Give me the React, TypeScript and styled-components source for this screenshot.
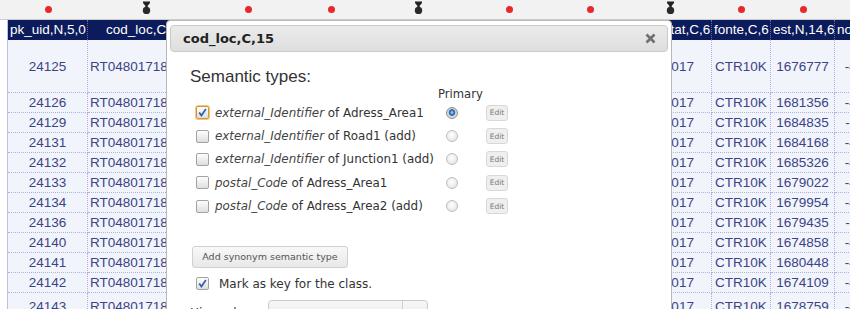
import React from 'react'
import styled, { createGlobalStyle } from 'styled-components'

type Marker = 'dot' | 'pin'

// columns hidden behind the dialog keep short names and no cell text
const columns: { name: string; width: number; marker: Marker; left?: boolean; hidden?: boolean }[] = [
  { name: 'pk_uid,N,5,0', width: 80, marker: 'dot' },
  { name: 'cod_loc,C,15', width: 116, marker: 'pin', left: true },
  { name: 'loc,C,40', width: 88, marker: 'dot', hidden: true },
  { name: 'freg,C,30', width: 78, marker: 'dot', hidden: true },
  { name: 'conc,C,30', width: 96, marker: 'pin', hidden: true },
  { name: 'dist,C,20', width: 86, marker: 'dot', hidden: true },
  { name: 'cp,C,8', width: 76, marker: 'dot', hidden: true },
  { name: 'data_stat,C,6', width: 84, marker: 'pin' },
  { name: 'fonte,C,6', width: 59, marker: 'dot' },
  { name: 'est,N,14,6', width: 64, marker: 'dot' },
  { name: 'nord,N,14,6', width: 70, marker: 'dot' },
]

const template = columns.map(c => `${c.width}px`).join(' ')

const rows = [
  { uid: 24125, est: 1676777, nord: '-412345', h: 53 },
  { uid: 24126, est: 1681356, nord: '-410982' },
  { uid: 24129, est: 1684835, nord: '-411574' },
  { uid: 24131, est: 1684168, nord: '-413206' },
  { uid: 24132, est: 1685326, nord: '-410451' },
  { uid: 24133, est: 1679022, nord: '-412890' },
  { uid: 24134, est: 1679954, nord: '-412617' },
  { uid: 24136, est: 1679435, nord: '-411038' },
  { uid: 24140, est: 1674858, nord: '-414472' },
  { uid: 24141, est: 1680448, nord: '-410725' },
  { uid: 24142, est: 1674109, nord: '-413359' },
  { uid: 24143, est: 1678759, nord: '-412003', h: 28 },
]

const semanticTypes = [
  { prop: 'external_Identifier', cls: 'Adress_Area1', checked: true, primary: true },
  { prop: 'external_Identifier', cls: 'Road1 (add)' },
  { prop: 'external_Identifier', cls: 'Junction1 (add)' },
  { prop: 'postal_Code', cls: 'Adress_Area1' },
  { prop: 'postal_Code', cls: 'Adress_Area2 (add)' },
]

const GlobalStyle = createGlobalStyle`
  html, body {
    margin: 0;
    padding: 0;
    background: #fff;
  }
`

const Page = styled.div`
  position: relative;
  width: 850px;
  height: 309px;
  overflow: hidden;
  background: #fff;
  font-family: 'Liberation Sans', Arial, sans-serif;
`

const MarkerBar = styled.div`
  display: grid;
  grid-template-columns: ${template};
  height: 19px;
  padding-left: 8px;
  background: #f2f2f2;
  border-bottom: 1px solid #cdcdcd;
`

const MarkerCell = styled.div`
  display: flex;
  justify-content: center;
  align-items: center;
`

const Dot = styled.span`
  width: 7px;
  height: 7px;
  border-radius: 50%;
  background: #e8292b;
`

const PinIcon = styled.svg`
  align-self: flex-start;
  margin-top: 1px;
`

const Table = styled.div`
  display: flex;
  flex-direction: column;
  width: max-content;
  margin-left: 7px;
  border-left: 1px solid #b9c1ea;
`

const Row = styled.div<{ $h: number }>`
  display: grid;
  grid-template-columns: ${template};
  height: ${p => p.$h}px;
`

const HeadCell = styled.div`
  box-sizing: border-box;
  height: 20px;
  line-height: 20px;
  padding: 0 2px;
  background: #0b1b5c;
  color: #fff;
  font-size: 13.5px;
  text-align: center;
  white-space: nowrap;
  overflow: hidden;
  border-right: 1px dotted #5d6db0;
`

const Cell = styled.div<{ $left?: boolean }>`
  box-sizing: border-box;
  display: flex;
  align-items: center;
  justify-content: ${p => (p.$left ? 'flex-start' : 'center')};
  padding-left: ${p => (p.$left ? '2px' : '0')};
  background: #f2f4fc;
  color: #3a4484;
  font-size: 13.5px;
  white-space: nowrap;
  overflow: hidden;
  border-right: 1px dotted #aab3e3;
  border-bottom: 1px dotted #aab3e3;
`

const Dialog = styled.div`
  position: absolute;
  left: 166px;
  top: 20px;
  width: 506px;
  height: 330px;
  box-sizing: border-box;
  padding: 4px 3px;
  background: #fff;
  border: 1px solid #b8b8b8;
  border-radius: 4px;
  font-family: 'DejaVu Sans', Verdana, sans-serif;
  color: #333;
`

const TitleBar = styled.div`
  display: flex;
  align-items: center;
  justify-content: space-between;
  height: 25px;
  padding: 0 11px 0 12px;
  border: 1px solid #c9c9c9;
  border-radius: 4px;
  background: linear-gradient(#ebebeb, #dedede);
`

const Title = styled.span`
  font-size: 13px;
  font-weight: bold;
  color: #222;
`

const Body = styled.div`
  padding: 15px 20px 0;
`

const SectionTitle = styled.div`
  font-family: 'Liberation Sans', Arial, sans-serif;
  font-size: 17px;
  line-height: 20px;
  color: #333;
`

const TypeList = styled.div`
  display: grid;
  grid-template-columns: 242px 48px 30px;
  grid-template-rows: 14px;
  grid-auto-rows: 23.4px;
  margin-left: 6px;
`

const PrimaryLabel = styled.div`
  grid-column: 2;
  font-size: 11.6px;
  line-height: 14px;
  white-space: nowrap;
`

const LabelCell = styled.div`
  grid-column: 1;
  display: flex;
  align-items: center;
  gap: 6px;
  font-size: 11.9px;
  white-space: nowrap;
`

const Prop = styled.em`
  color: #444;
`

const Box = styled.span<{ $focus?: boolean }>`
  display: inline-flex;
  align-items: center;
  justify-content: center;
  flex-shrink: 0;
  width: 13px;
  height: 13px;
  box-sizing: border-box;
  border: 1px solid ${p => (p.$focus ? '#d3973a' : '#a2a2a2')};
  border-radius: 2px;
  background: linear-gradient(#fefefe, #dedede);
  box-shadow: ${p => (p.$focus ? '0 0 0 1px #f4c77e' : 'none')};
`

const RadioCell = styled.div`
  display: flex;
  align-items: center;
  padding-left: 8px;
`

const Radio = styled.span<{ $on?: boolean }>`
  width: 12px;
  height: 12px;
  box-sizing: border-box;
  border-radius: 50%;
  border: 1px solid ${p => (p.$on ? '#8c8c8c' : '#bdbdbd')};
  background: ${p =>
    p.$on
      ? 'radial-gradient(circle at 50% 45%, #8cc0ea 0 1px, #2f72b8 1.8px 3px, #cfcfcf 3.6px, #f2f2f2 100%)'
      : 'radial-gradient(circle at 45% 40%, #ffffff, #dedede)'};
`

const EditCell = styled.div`
  display: flex;
  align-items: center;
`

const EditButton = styled.span`
  display: inline-flex;
  align-items: center;
  justify-content: center;
  width: 22px;
  height: 16px;
  box-sizing: border-box;
  border: 1px solid #d8d8d8;
  border-radius: 3px;
  background: #efefef;
  color: #777;
  font-size: 7.5px;
`

const AddButton = styled.div`
  display: flex;
  align-items: center;
  justify-content: center;
  width: 156px;
  height: 22px;
  box-sizing: border-box;
  margin: 28px 0 0 2px;
  border: 1px solid #d0d0d0;
  border-radius: 3px;
  background: linear-gradient(#f8f8f8, #e8e8e8);
  color: #555;
  font-size: 9.5px;
`

const KeyRow = styled.div`
  display: flex;
  align-items: center;
  gap: 10px;
  height: 20px;
  margin: 6px 0 0 6px;
  font-size: 12px;
`

const FieldRow = styled.div`
  display: flex;
  align-items: flex-start;
  margin-top: 6px;
`

const FieldLabel = styled.span`
  width: 78px;
  font-size: 12px;
  line-height: 16px;
  margin-top: 5px;
`

const Select = styled.div`
  display: flex;
  width: 160px;
  height: 22px;
  box-sizing: border-box;
  border: 1px solid #c8c8c8;
  border-radius: 4px;
  background: linear-gradient(#f7f7f7, #e9e9e9);
  font-size: 11px;
`

const SelectText = styled.span`
  flex: 1;
  padding: 6px 0 0 22px;
  border-right: 1px solid #cfcfcf;
  color: #555;
`

const SelectArrow = styled.span`
  width: 24px;
`

const Pin = () => (
  <PinIcon width="9" height="14" viewBox="0 0 9 14">
    <path d="M1 0.5h7v1.6l-2.3 2.6v2h-2.4v-2L1 2.1z" fill="#222" />
    <circle cx="4.5" cy="9.4" r="3.7" fill="#2a2a2a" />
  </PinIcon>
)

const Check = () => (
  <svg width="9" height="9" viewBox="0 0 9 9">
    <path d="M1.2 4.6 L3.4 7.5 L7.9 1.1" fill="none" stroke="#2d5fa6" strokeWidth="1.7" />
  </svg>
)

const Close = () => (
  <svg width="11" height="11" viewBox="0 0 11 11">
    <path d="M1.5 1.5L9.5 9.5M9.5 1.5L1.5 9.5" stroke="#707070" strokeWidth="2.6" />
  </svg>
)

const cellValues = (r: (typeof rows)[number]) => [
  String(r.uid),
  `RT04801718${r.uid}`,
  '',
  '',
  '',
  '',
  '',
  '09/2017',
  'CTR10K',
  String(r.est),
  r.nord,
]

export default function App() {
  return (
    <Page>
      <GlobalStyle />
      <MarkerBar>
        {columns.map(c => (
          <MarkerCell key={c.name}>{c.marker === 'dot' ? <Dot /> : <Pin />}</MarkerCell>
        ))}
      </MarkerBar>
      <Table>
        <Row $h={20}>
          {columns.map(c => (
            <HeadCell key={c.name}>{c.name}</HeadCell>
          ))}
        </Row>
        {rows.map(r => (
          <Row key={r.uid} $h={r.h ?? 20}>
            {cellValues(r).map((v, i) => (
              <Cell key={i} $left={columns[i].left}>
                {v}
              </Cell>
            ))}
          </Row>
        ))}
      </Table>

      <Dialog>
        <TitleBar>
          <Title>cod_loc,C,15</Title>
          <Close />
        </TitleBar>
        <Body>
          <SectionTitle>Semantic types:</SectionTitle>
          <TypeList>
            <PrimaryLabel>Primary</PrimaryLabel>
            {semanticTypes.map((t, i) => (
              <React.Fragment key={i}>
                <LabelCell>
                  <Box $focus={t.checked}>{t.checked && <Check />}</Box>
                  <span>
                    <Prop>{t.prop}</Prop> of {t.cls}
                  </span>
                </LabelCell>
                <RadioCell>
                  <Radio $on={t.primary} />
                </RadioCell>
                <EditCell>
                  <EditButton>Edit</EditButton>
                </EditCell>
              </React.Fragment>
            ))}
          </TypeList>
          <AddButton>Add synonym semantic type</AddButton>
          <KeyRow>
            <Box>
              <Check />
            </Box>
            <span>Mark as key for the class.</span>
          </KeyRow>
          <FieldRow>
            <FieldLabel>Hierarchy:</FieldLabel>
            <Select>
              <SelectText>select...</SelectText>
              <SelectArrow />
            </Select>
          </FieldRow>
        </Body>
      </Dialog>
    </Page>
  )
}
